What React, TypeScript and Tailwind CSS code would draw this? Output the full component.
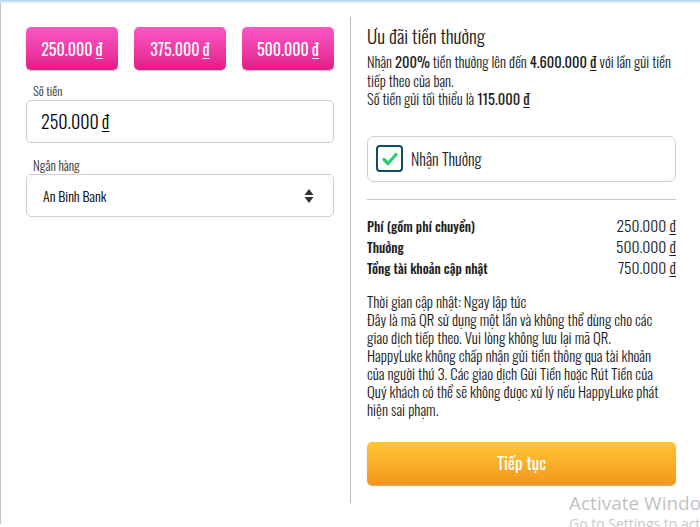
import React from "react";

function Amt({ v }: { v: string }) {
  return (
    <>
      {v}<span className="ml-[3px] underline underline-offset-2 decoration-1">đ</span>
    </>
  );
}

const notes = [
  "Thời gian cập nhật: Ngay lập tức",
  "Đây là mã QR sử dụng một lần và không thể dùng cho các",
  "giao dịch tiếp theo. Vui lòng không lưu lại mã QR.",
  "HappyLuke không chấp nhận gửi tiền thông qua tài khoản",
  "của người thứ 3. Các giao dịch Gửi Tiền hoặc Rút Tiền của",
  "Quý khách có thể sẽ không được xử lý nếu HappyLuke phát",
  "hiện sai phạm.",
];

export default function App() {
  const pinkBtn =
    "h-[43px] rounded-[5px] bg-gradient-to-b from-[#fb57c6] to-[#e2178a] shadow-[0_1px_1px_rgba(0,0,0,0.25)] text-white text-[16px] font-normal flex items-center justify-center";
  return (
    <div className="relative w-[700px] h-[527px] bg-white overflow-hidden text-[#1c1c1c] font-['Oswald',sans-serif] font-light">
      <div className="h-[3px] bg-gradient-to-b from-[#a8d2ec] to-[#eef6fb]" />
      <div className="h-[521px] border-l border-[#c4c4c4] flex pt-[14px]">
        {/* Left column */}
        <div className="w-[349px] shrink-0 pl-[25px] pr-[16px] pt-[10px]">
          <div className="grid grid-cols-3 gap-[16px]">
            <div className={pinkBtn}><Amt v="250.000" /></div>
            <div className={pinkBtn}><Amt v="375.000" /></div>
            <div className={pinkBtn}><Amt v="500.000" /></div>
          </div>
          <div className="pt-[12px] pl-[7px] text-[12.5px] leading-[18px] text-[#333]">Số tiền</div>
          <div className="h-[43px] border border-[#cfcfcf] rounded-[5px] flex items-center pl-[14px] text-[18px] text-black">
            <span><Amt v="250.000" /></span>
          </div>
          <div className="pt-[13px] pl-[7px] text-[13px] leading-[18px] text-[#333]">Ngân hàng</div>
          <div className="h-[43px] border border-[#cfcfcf] rounded-[5px] flex items-center justify-between pl-[16px] pr-[19px] text-[14px] text-black">
            <span>An Binh Bank</span>
            <svg width="10" height="16" viewBox="0 0 10 16">
              <path d="M5 1 L9.5 7 L0.5 7 Z" fill="#333" />
              <path d="M5 15 L9.5 9 L0.5 9 Z" fill="#333" />
            </svg>
          </div>
        </div>
        {/* Right column */}
        <div className="w-[351px] h-[486px] border-l border-[#bdbdbd] pl-[16px] pr-[24px] pt-[6px]">
          <div className="text-[19px] leading-[24px]">Ưu đãi tiền thưởng</div>
          <div className="mt-[6px] text-[14.5px] leading-[18.5px] whitespace-nowrap">
            <div>
              Nhận <span className="font-normal">200%</span> tiền thưởng lên đến <span className="font-normal"><Amt v="4.600.000" /></span> với lần gửi tiền
            </div>
            <div>tiếp theo của bạn.</div>
            <div>
              Số tiền gửi tối thiểu là <span className="font-normal"><Amt v="115.000" /></span>
            </div>
          </div>
          <div className="mt-[27px] h-[46px] border border-[#cfcfcf] rounded-[7px] flex items-center pl-[8px] gap-[8px]">
            <div className="w-[27px] h-[27px] border-2 border-[#0e4c6c] rounded-[4px] flex items-center justify-center">
              <svg width="16" height="14" viewBox="0 0 16 14">
                <path d="M2 7.5 L6 11.5 L14 2.5" stroke="#2ecc71" strokeWidth="3.2" fill="none" strokeLinecap="round" strokeLinejoin="round" />
              </svg>
            </div>
            <span className="text-[16px]">Nhận Thưởng</span>
          </div>
          <div className="mt-[17px] h-px bg-[#c8c8c8]" />
          <div className="mt-[15px] leading-[20px]">
            <div className="flex justify-between items-baseline"><span className="font-medium text-[13.2px]">Phí (gồm phí chuyển)</span><span className="text-[15.5px]"><Amt v="250.000" /></span></div>
            <div className="flex justify-between items-baseline"><span className="font-medium text-[13.2px]">Thưởng</span><span className="text-[15.5px]"><Amt v="500.000" /></span></div>
            <div className="flex justify-between items-baseline"><span className="font-medium text-[13.2px]">Tổng tài khoản cập nhật</span><span className="text-[15.5px]"><Amt v="750.000" /></span></div>
          </div>
          <div className="mt-[14px] text-[14.8px] leading-[18px] whitespace-nowrap">
            {notes.map((l) => (
              <div key={l}>{l}</div>
            ))}
          </div>
          <div className="mt-[24px] h-[43px] rounded-[5px] bg-gradient-to-b from-[#fec634] to-[#f4961c] shadow-[0_1px_1px_rgba(150,80,0,0.5)] flex items-center justify-center text-white text-[17px] font-normal">
            Tiếp tục
          </div>
        </div>
      </div>
      <div className="absolute left-[569px] top-[491px] text-[#c2c2c2] text-[19px] leading-[24px] whitespace-nowrap font-['Open_Sans',sans-serif] font-normal">
        Activate Windows
      </div>
      <div className="absolute left-[569px] top-[515px] text-[#c8c8c8] text-[14px] leading-[18px] whitespace-nowrap font-['Open_Sans',sans-serif] font-normal">
        Go to Settings to activate Windows.
      </div>
    </div>
  );
}
